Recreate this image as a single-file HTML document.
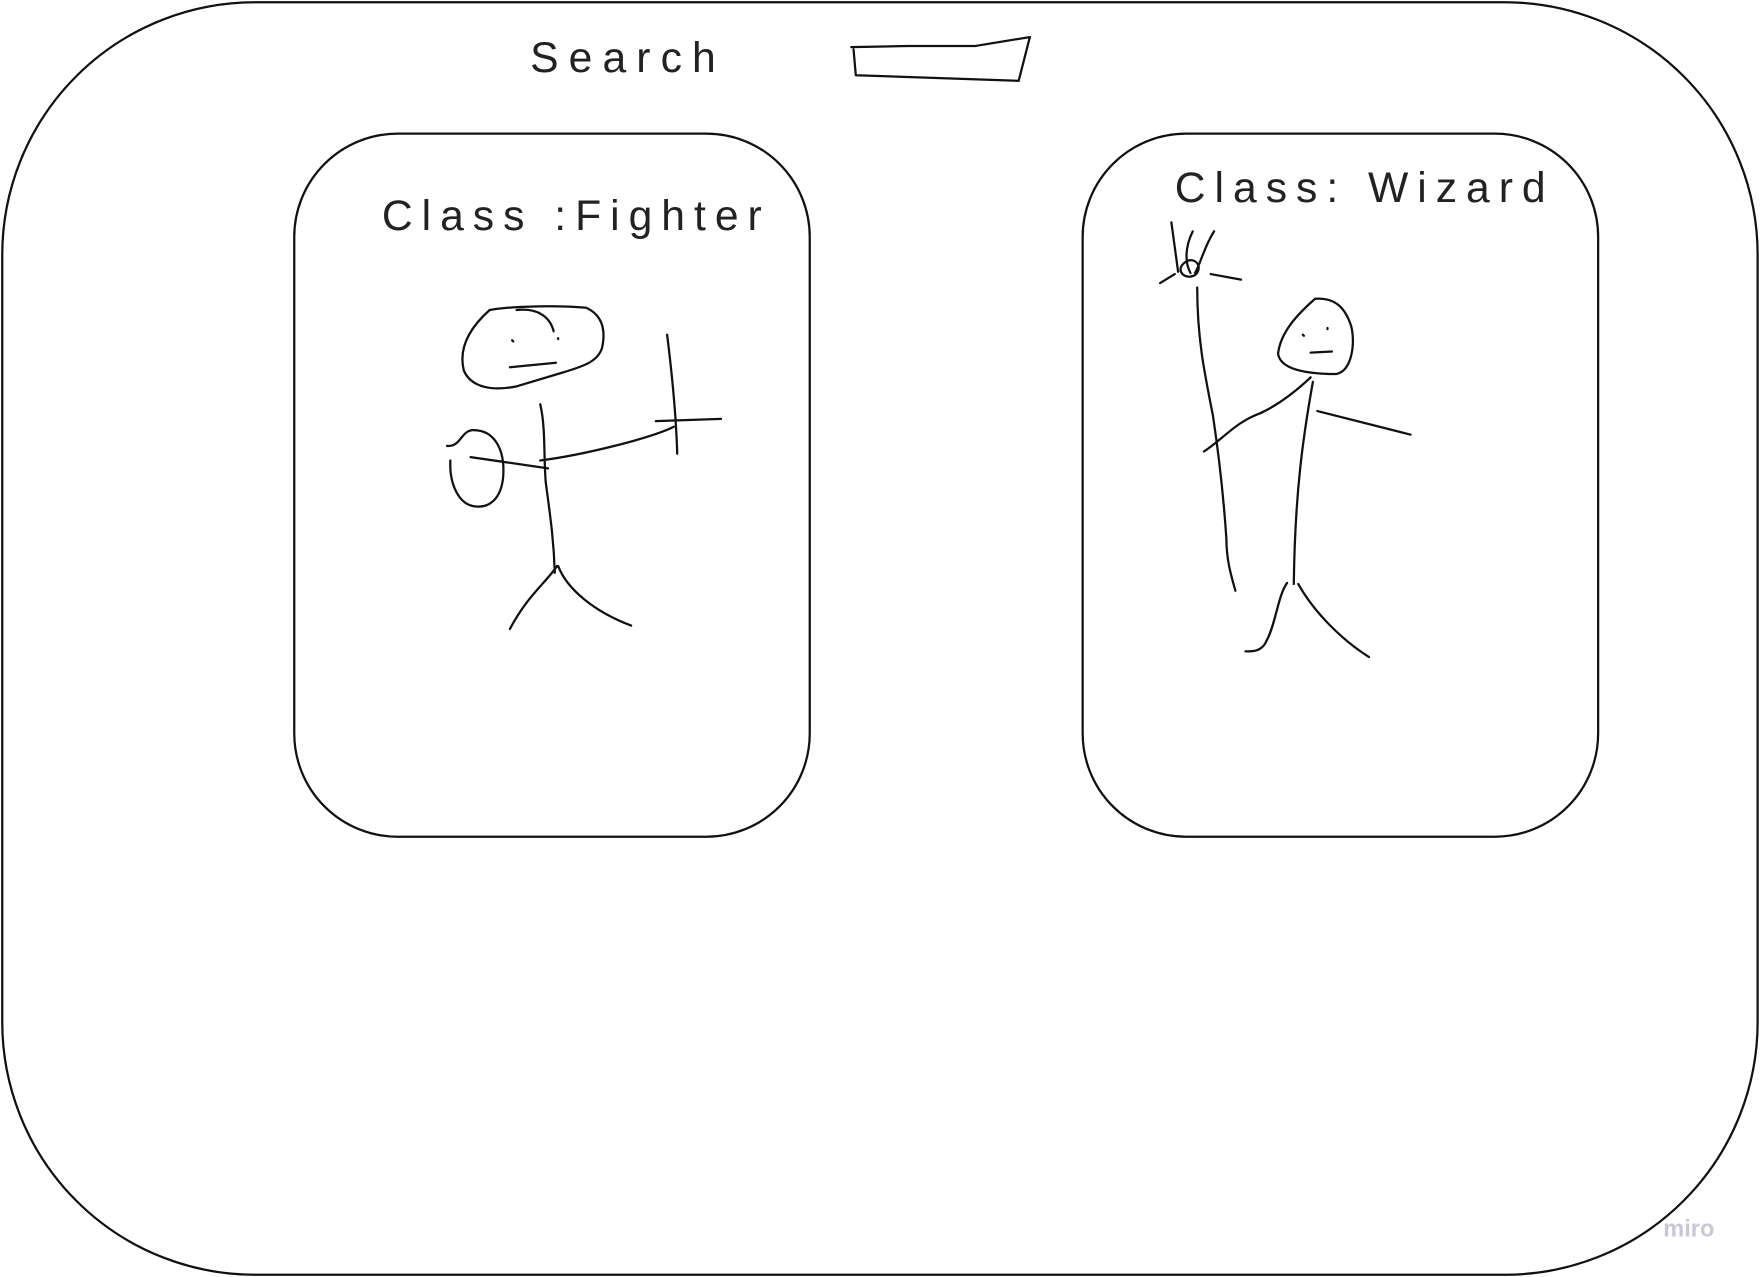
<!DOCTYPE html>
<html><head><meta charset="utf-8"><style>
html,body{margin:0;padding:0;background:#fff;width:1761px;height:1277px;overflow:hidden}
svg{display:block}
text{font-family:"Liberation Sans","DejaVu Sans",sans-serif;fill:#222}
</style></head><body>
<svg width="1761" height="1277" viewBox="0 0 1568 1137" preserveAspectRatio="none" xmlns="http://www.w3.org/2000/svg">
<g fill="none" stroke="#111" stroke-width="2" stroke-linecap="round" stroke-linejoin="round">
<path d="M228 2 H1340 A225 225 0 0 1 1565 227 V910 A225 225 0 0 1 1340 1135 H228 A225 225 0 0 1 2 910 V227 A225 225 0 0 1 228 2 Z"/>
<rect x="262" y="119" width="459" height="626" rx="92"/>
<rect x="964" y="119" width="459" height="626" rx="92"/>
<path d="M758 42 L808 41 L868 41 L917 33 L907 72 L762 67 L760 44"/>
<path d="M436 276 C460 272 500 272 522 274 C535 280 540 292 536 310 C532 322 520 326 500 332 L460 344 C440 348 420 346 413 330 C408 310 418 292 436 276 Z"/>
<path d="M460 276 C480 274 490 283 493 295"/>
<path d="M456 303 L457 304 M497 301 L497 302 M454 327 L495 323"/>
<path d="M481 360 C486 380 484 410 486 430 C490 460 493 480 494 510"/>
<path d="M496 504 C485 520 470 530 454 560 M497 504 C505 525 530 545 562 557"/>
<path d="M419 407 L488 417 M481 410 C520 405 580 390 600 380"/>
<path d="M594 298 C598 330 602 370 603 404 M584 375 L642 373"/>
<path d="M398 397 C410 398 410 385 420 383 C440 382 450 400 448 425 C446 445 435 452 424 451 C408 450 400 430 401 410"/>
<path d="M1043 198 L1049 242 M1062 206 C1055 220 1055 234 1060 243 M1081 206 C1072 220 1069 235 1064 243 M1033 252 L1046 244 M1078 244 L1105 249"/>
<path d="M1056 233 C1064 228 1072 238 1064 245 C1055 250 1045 240 1056 233 Z"/>
<path d="M1066 256 C1066 300 1072 330 1080 370 C1086 410 1090 450 1092 480 C1092 500 1097 515 1100 526"/>
<path d="M1171 266 C1155 280 1140 296 1138 315 C1140 328 1160 333 1190 333 C1204 330 1207 305 1203 290 C1198 275 1190 265 1171 266 Z"/>
<path d="M1160 298 L1161 299 M1182 292 L1182 293 M1167 314 L1186 313"/>
<path d="M1169 340 C1160 390 1153 440 1152 520"/>
<path d="M1167 336 C1150 352 1135 362 1122 368 C1100 376 1090 390 1072 402"/>
<path d="M1173 366 L1256 387"/>
<path d="M1146 519 C1138 530 1136 555 1128 570 C1124 580 1116 580 1109 580 M1156 520 C1170 545 1195 570 1219 585"/>
</g>
<text x="472" y="64" font-size="38" letter-spacing="9">Search</text>
<text x="340" y="205" font-size="38" letter-spacing="8">Class :Fighter</text>
<text x="1046" y="180" font-size="38" letter-spacing="8">Class: Wizard</text>
<text x="1481" y="1101" font-size="21" style="fill:#c8c8d2" font-weight="bold">miro</text>
</svg>
</body></html>
